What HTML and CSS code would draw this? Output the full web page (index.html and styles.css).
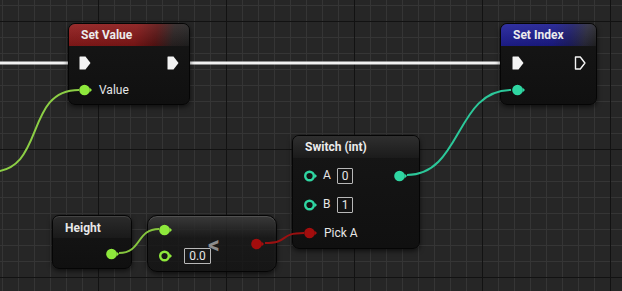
FILE: index.html
```html
<!DOCTYPE html>
<html lang="en">
<head>
    <meta charset="UTF-8">
    <title>Blueprint Graph</title>
    <link rel="stylesheet" href="styles.css">
</head>
<body>
    <div class="graph">
        <!-- exec wires sit under the nodes -->
        <svg class="wires wires-exec" width="622" height="291">
            <line x1="0" y1="63" x2="512" y2="63" stroke="#f2f2f2" stroke-width="3"/>
        </svg>

        <div class="node node-set-value">
            <div class="node-head head-red">Set Value</div>
            <div class="node-body">
                <div class="pin-row">
                    <svg class="pin-exec" width="12" height="14" viewBox="0 0 12 14"><path d="M1 0.5 H6.5 L11.5 7 L6.5 13.5 H1 Q0.5 13.5 0.5 13 V1 Q0.5 0.5 1 0.5 Z" fill="#f4f4f4"/></svg>
                    <svg class="pin-exec push-right" width="12" height="14" viewBox="0 0 12 14"><path d="M1 0.5 H6.5 L11.5 7 L6.5 13.5 H1 Q0.5 13.5 0.5 13 V1 Q0.5 0.5 1 0.5 Z" fill="#f4f4f4"/></svg>
                </div>
                <div class="pin-row">
                    <svg class="pin" width="14" height="12" viewBox="0 0 14 12"><circle cx="5.5" cy="6" r="5.3" fill="#8ee83c"/><path d="M10.5 3.5 L13 6 L10.5 8.5 Z" fill="#8ee83c"/></svg>
                    <span class="pin-label">Value</span>
                </div>
            </div>
        </div>

        <div class="node node-set-index">
            <div class="node-head head-blue">Set Index</div>
            <div class="node-body">
                <div class="pin-row">
                    <svg class="pin-exec" width="12" height="14" viewBox="0 0 12 14"><path d="M1 0.5 H6.5 L11.5 7 L6.5 13.5 H1 Q0.5 13.5 0.5 13 V1 Q0.5 0.5 1 0.5 Z" fill="#f4f4f4"/></svg>
                    <svg class="pin-exec push-right" width="12" height="14" viewBox="0 0 12 14"><path d="M1.5 1 H6.3 L10.9 7 L6.3 13 H1.5 Z" fill="none" stroke="#f4f4f4" stroke-width="1.4" stroke-linejoin="round"/></svg>
                </div>
                <div class="pin-row">
                    <svg class="pin" width="14" height="12" viewBox="0 0 14 12"><circle cx="5.5" cy="6" r="5.3" fill="#2fd6a2"/><path d="M10.5 3.5 L13 6 L10.5 8.5 Z" fill="#2fd6a2"/></svg>
                </div>
            </div>
        </div>

        <div class="node node-switch">
            <div class="node-head head-grey">Switch (int)</div>
            <div class="node-body switch-body">
                <div class="pin-row">
                    <svg class="pin" width="14" height="12" viewBox="0 0 14 12"><circle cx="5.5" cy="6" r="4.3" fill="none" stroke="#2fd6a2" stroke-width="2.4"/><path d="M10.5 3.5 L13 6 L10.5 8.5 Z" fill="#2fd6a2"/></svg>
                    <span class="pin-label short">A</span>
                    <span class="value-box">0</span>
                    <svg class="pin push-right" width="14" height="12" viewBox="0 0 14 12"><circle cx="5.5" cy="6" r="5.3" fill="#2fd6a2"/><path d="M10.5 3.5 L13 6 L10.5 8.5 Z" fill="#2fd6a2"/></svg>
                </div>
                <div class="pin-row">
                    <svg class="pin" width="14" height="12" viewBox="0 0 14 12"><circle cx="5.5" cy="6" r="4.3" fill="none" stroke="#2fd6a2" stroke-width="2.4"/><path d="M10.5 3.5 L13 6 L10.5 8.5 Z" fill="#2fd6a2"/></svg>
                    <span class="pin-label short">B</span>
                    <span class="value-box">1</span>
                </div>
                <div class="pin-row">
                    <svg class="pin" width="14" height="12" viewBox="0 0 14 12"><circle cx="5.5" cy="6" r="5.3" fill="#a30d0d"/><path d="M10.5 3.5 L13 6 L10.5 8.5 Z" fill="#a30d0d"/></svg>
                    <span class="pin-label">Pick A</span>
                </div>
            </div>
        </div>

        <div class="node node-height">
            <div class="height-title">Height</div>
            <div class="height-out">
                <svg class="pin" width="14" height="12" viewBox="0 0 14 12"><circle cx="5.5" cy="6" r="5.3" fill="#8ee83c"/><path d="M10.5 3.5 L13 6 L10.5 8.5 Z" fill="#8ee83c"/></svg>
            </div>
        </div>

        <div class="node node-compact">
            <div class="compact-inputs">
                <div class="pin-row">
                    <svg class="pin" width="14" height="12" viewBox="0 0 14 12"><circle cx="5.5" cy="6" r="5.3" fill="#8ee83c"/><path d="M10.5 3.5 L13 6 L10.5 8.5 Z" fill="#8ee83c"/></svg>
                </div>
                <div class="pin-row">
                    <svg class="pin" width="14" height="12" viewBox="0 0 14 12"><circle cx="5.5" cy="6" r="4.3" fill="none" stroke="#8ee83c" stroke-width="2.4"/><path d="M10.5 3.5 L13 6 L10.5 8.5 Z" fill="#8ee83c"/></svg>
                    <span class="value-box wide">0.0</span>
                </div>
            </div>
            <svg class="pin compact-out" width="14" height="12" viewBox="0 0 14 12"><circle cx="5.5" cy="6" r="5.3" fill="#a30d0d"/><path d="M10.5 3.5 L13 6 L10.5 8.5 Z" fill="#a30d0d"/></svg>
            <span class="compact-op">&lt;</span>
        </div>

        <!-- data wires -->
        <svg class="wires wires-data" width="622" height="291">
            <path d="M-10 172 C47 172, 23 90, 79 90" fill="none" stroke="#8ccf45" stroke-width="2"/>
            <path d="M407 175 C462 175, 455 90, 511 90" fill="none" stroke="#2cc89a" stroke-width="2"/>
            <path d="M265 243 C290 243, 278 233, 304 233" fill="none" stroke="#9a1010" stroke-width="2"/>
            <path d="M119 253 C142 253, 136 229, 159 229" fill="none" stroke="#86c63e" stroke-width="2"/>
        </svg>
    </div>
</body>
</html>
```

FILE: styles.css
```css
* {
    margin: 0;
    padding: 0;
    box-sizing: border-box;
}

body {
    font-family: Roboto, 'Liberation Sans', sans-serif;
    background: #262626;
    overflow: hidden;
}

.graph {
    position: relative;
    width: 622px;
    height: 291px;
    background-color: #262626;
    background-image:
        linear-gradient(to right, #121212 1px, transparent 1px),
        linear-gradient(to bottom, #121212 1px, transparent 1px),
        linear-gradient(to right, #353535 1px, transparent 1px),
        linear-gradient(to bottom, #353535 1px, transparent 1px);
    background-size: 128px 128px, 128px 128px, 16px 16px, 16px 16px;
    background-position: 98px 0, 0 21px, 2px 0, 0 5px;
}

.wires {
    position: absolute;
    left: 0;
    top: 0;
    pointer-events: none;
}

.wires-exec {
    z-index: 0;
}

.wires-data {
    z-index: 2;
}

/* nodes */

.node {
    position: absolute;
    z-index: 1;
    background: linear-gradient(to bottom, #161616, #101010);
    border: 1px solid #050505;
    border-radius: 7px;
    box-shadow: 0 2px 5px rgba(0, 0, 0, 0.6), inset 0 1px 0 rgba(255, 255, 255, 0.12);
    color: #e8e8e8;
    overflow: hidden;
}

.node-head {
    height: 22px;
    padding-left: 12px;
    font-size: 12px;
    font-weight: 700;
    line-height: 23px;
    color: #ececec;
}

.head-red {
    background:
        linear-gradient(to bottom, rgba(255, 255, 255, 0.08), rgba(0, 0, 0, 0.15)),
        linear-gradient(100deg, #901b1b 0%, #871818 55%, #5c1414 72%, #2b2323 86%, #222 100%);
}

.head-blue {
    background:
        linear-gradient(to bottom, rgba(255, 255, 255, 0.08), rgba(0, 0, 0, 0.15)),
        linear-gradient(100deg, #20209a 0%, #1c1c8e 55%, #1d1d6a 72%, #2a2a3e 88%, #242424 100%);
}

.head-grey {
    background: linear-gradient(to bottom, #2f2f2f, #1b1b1b);
}

.node-body {
    display: flex;
    flex-direction: column;
    gap: 13px;
    padding: 10px 10px 0 10px;
}

.pin-row {
    display: flex;
    align-items: center;
    min-height: 14px;
}

.push-right {
    margin-left: auto;
}

.pin-label {
    margin-left: 6px;
    font-size: 12px;
    color: #e6e6e6;
}

.pin-label.short {
    width: 14px;
    margin-left: 5px;
    align-self: flex-start;
    line-height: 14px;
}

.value-box {
    display: inline-block;
    min-width: 16px;
    height: 16px;
    padding: 0 3px;
    border: 1px solid #b8b8b8;
    border-radius: 1px;
    font-size: 12px;
    line-height: 14px;
    text-align: center;
    color: #e6e6e6;
}

.value-box.wide {
    width: 27px;
    margin-left: 11px;
}

/* Set Value */

.node-set-value {
    left: 68px;
    top: 23px;
    width: 122px;
    height: 82px;
}

/* Set Index */

.node-set-index {
    left: 500px;
    top: 23px;
    width: 97px;
    height: 82px;
}

.node-set-index .node-body {
    padding-left: 11px;
}

/* Switch */

.node-switch {
    left: 292px;
    top: 135px;
    width: 128px;
    height: 114px;
}

.switch-body {
    padding: 10px 11px 0 11px;
    gap: 12.5px;
}

.switch-body .pin-row {
    min-height: 16px;
}

/* Height */

.node-height {
    left: 52px;
    top: 215px;
    width: 80px;
    height: 54px;
    background: linear-gradient(to bottom, #2b2b2b 0, #1a1a1a 22px, #131313 40%, #101010 100%);
}

.height-title {
    padding: 5px 0 0 12px;
    font-size: 12px;
    font-weight: 700;
    line-height: 15px;
}

.height-out {
    display: flex;
    justify-content: flex-end;
    padding: 12px 11px 0 0;
}

/* compact node */

.node-compact {
    left: 147px;
    top: 215px;
    width: 130px;
    height: 57px;
    display: flex;
    align-items: center;
    background: linear-gradient(to bottom, rgba(60, 60, 60, 0.85), rgba(22, 22, 22, 0.82) 40%, rgba(18, 18, 18, 0.8));
    border-radius: 10px;
}

.compact-inputs {
    display: flex;
    flex-direction: column;
    gap: 11px;
    padding-left: 11px;
    align-self: flex-start;
    padding-top: 7px;
}

.compact-out {
    margin-left: auto;
    margin-right: 11px;
}

.compact-op {
    position: absolute;
    left: 60px;
    top: 19px;
    font-size: 23px;
    font-weight: 700;
    line-height: 22px;
    color: #8c8c8c;
}
```
